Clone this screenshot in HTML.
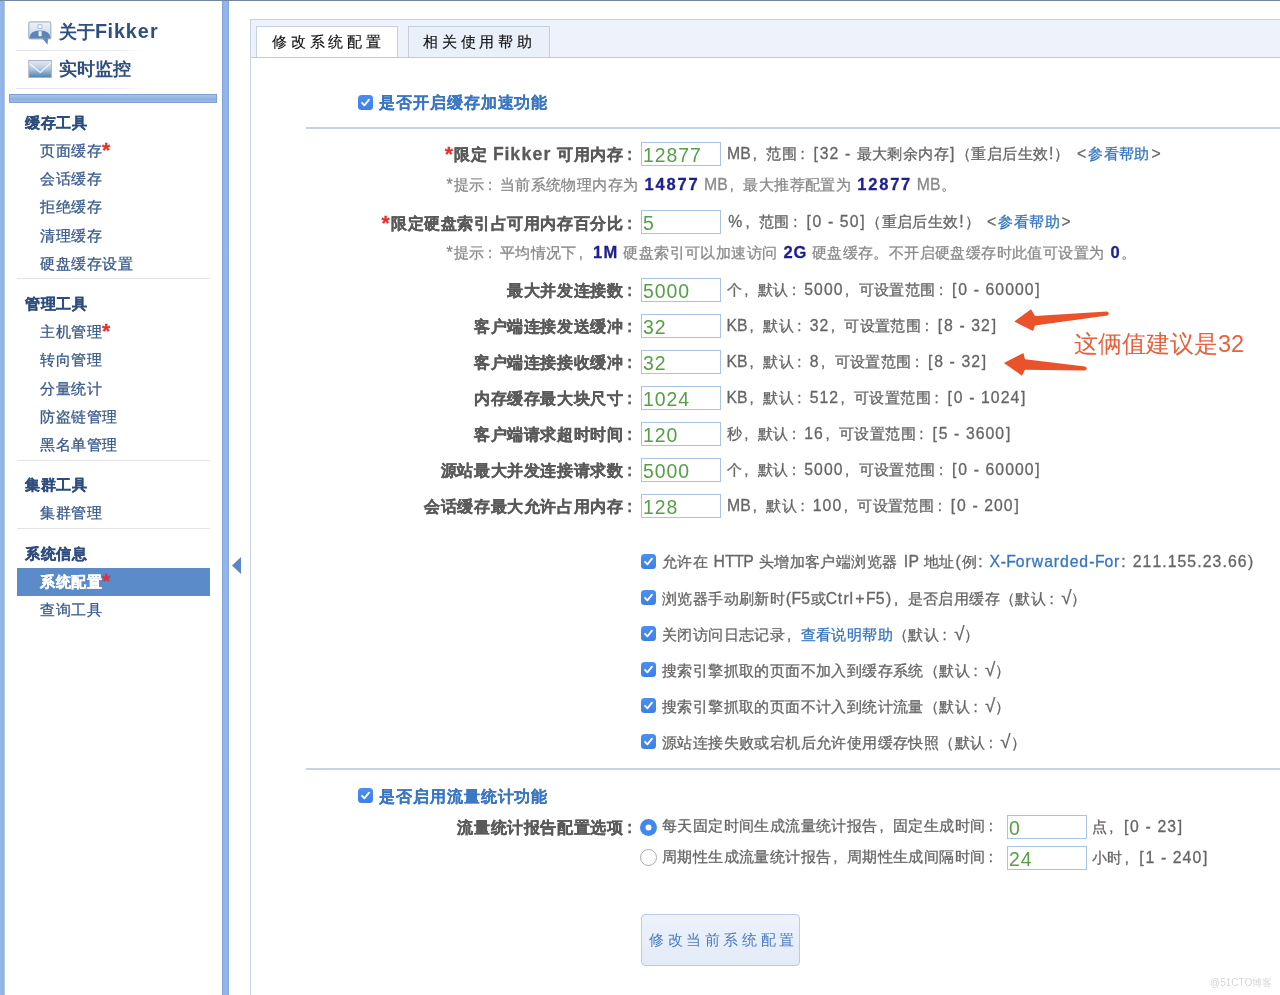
<!DOCTYPE html>
<html><head><meta charset="utf-8">
<style>
html,body{margin:0;padding:0;width:1280px;height:995px;overflow:hidden;background:#fff;}
body{position:relative;font-family:"Liberation Sans",sans-serif;}
#root{position:absolute;left:0;top:0;width:1280px;height:995px;will-change:transform;}
u{text-decoration:none;}
.fw{display:inline-block;text-decoration:none;letter-spacing:0;text-align:left;overflow:visible;}
.si,.u,.ct,.hint,.tab{-webkit-text-stroke:0.3px currentColor;}
.lab,.sh{-webkit-text-stroke:0.3px currentColor;}
.ttl{-webkit-text-stroke:0.15px currentColor;}
.tab{-webkit-text-stroke:0.15px currentColor!important;}
.a{position:absolute;white-space:nowrap;}
#topline{left:0;top:0;width:1280px;height:1px;background:#7486a6;}
#lstrip{left:0;top:0;width:5px;height:995px;background:linear-gradient(to right,#94b8ec 0,#8db1e6 70%,#6f90c4 80%,#fefefe 100%);}
#rbar{left:222px;top:0;width:7px;height:995px;background:linear-gradient(to right,#7d9cd0 0,#8fb3ea 20%,#95b9ee 60%,#86a8de 100%);}
.sep{position:absolute;height:1px;background:#e2e4e8;}
.sh{position:absolute;left:25px;font-size:15px;letter-spacing:.5px;line-height:18px;font-weight:bold;color:#2e4d7d;white-space:nowrap;}
.si{position:absolute;left:40px;font-size:15px;letter-spacing:.5px;line-height:18px;color:#3b5b8c;white-space:nowrap;}
.si b{color:#e8302a;font-weight:bold;font-size:21px;line-height:10px;vertical-align:-1px;}
#tabhdr{left:250px;top:19px;width:1030px;height:37px;background:#eef2fb;border-top:1px solid #c9cedd;border-bottom:1px solid #c3c9d6;}
#tabL{left:250px;top:19px;width:1px;height:976px;background:#c9d3e3;}
.tab{position:absolute;top:26px;height:31px;border:1px solid #c6cfdd;border-bottom:none;box-sizing:border-box;font-size:15px;line-height:29px;color:#111;letter-spacing:3.8px;white-space:nowrap;}
.rule{position:absolute;left:306px;width:974px;height:2px;background:#c5d3e6;}
.cb{position:absolute;width:15px;height:15px;border-radius:3.5px;background:linear-gradient(#4b8ff2,#3d7fe6);}
.cb svg{position:absolute;left:0;top:0}
.ttl{position:absolute;font-size:16px;letter-spacing:.93px;line-height:20px;font-weight:bold;color:#3a76c2;white-space:nowrap;}
.lab{position:absolute;right:640px;font-size:16px;letter-spacing:.6px;line-height:20px;font-weight:bold;color:#5a5a5a;white-space:nowrap;}
.rd{color:#e8302a;}
.rd u{font-size:21px!important;vertical-align:-1px;}
.inp{position:absolute;left:641px;width:80px;height:24px;border:1px solid #a9c4e2;box-sizing:border-box;background:#fff;}
.inp span{position:absolute;left:0.5px;top:2px;font-size:18.5px;line-height:20px;color:#55a045;white-space:nowrap;}
.u{position:absolute;left:727px;font-size:15px;letter-spacing:.4px;line-height:20px;color:#666;white-space:nowrap;}
.hint{position:absolute;left:446px;font-size:15px;letter-spacing:.4px;line-height:18px;color:#8a8a8a;white-space:nowrap;}
.hint b{color:#1f1f8f;}
.lk{color:#3676c0;}
.ct{position:absolute;left:662px;font-size:15px;letter-spacing:.4px;line-height:20px;color:#666;white-space:nowrap;}
</style></head><body>
<div id="root"><div class="a" id="lstrip"></div><div class="a" id="rbar"></div><div class="a" id="topline"></div>
<svg class="a" style="left:27px;top:20px" width="26" height="27" viewBox="0 0 26 27">
  <defs><linearGradient id="g1" x1="0" y1="0" x2="0" y2="1"><stop offset="0" stop-color="#eef2f7"/><stop offset="1" stop-color="#c9d6e6"/></linearGradient>
  <linearGradient id="g2" x1="0" y1="0" x2="0" y2="1"><stop offset="0" stop-color="#e2e9f1"/><stop offset="0.45" stop-color="#b9cde3"/><stop offset="1" stop-color="#4f7fb5"/></linearGradient></defs>
  <rect x="1.8" y="1.8" width="22" height="17.2" rx="1.5" fill="url(#g1)" stroke="#a9b5c4" stroke-width="1.2"/>
  <path d="M2.4 18.6 Q2.5 10.6 13 10.6 Q23.5 10.6 23.5 18.6 Z" fill="#5a86ba"/>
  <rect x="11.6" y="11.2" width="3" height="5" fill="#f2f6fa"/>
  <circle cx="13" cy="6.6" r="2.3" fill="#f4f7fb" stroke="#a9b8c9" stroke-width="1"/>
  <path d="M15.5 18.6 L20.5 24.8 L21 18.6 Z" fill="#5a86ba"/>
</svg>
<div class="a" style="left:59px;top:20px;font-size:18px;line-height:22px;font-weight:bold;color:#2f4f80;">关于<u style="font-size:19.80px;margin:0 0.10px 0 0.10px">F</u><u style="font-size:19.80px;margin:0 0.33px 0 0.33px">i</u><u style="font-size:19.80px;margin:0 0.48px 0 0.48px">k</u><u style="font-size:19.80px;margin:0 0.48px 0 0.48px">k</u><u style="font-size:19.80px;margin:0 0.47px 0 0.47px">e</u><u style="font-size:19.80px;margin:0 0.62px 0 0.62px">r</u></div>
<div class="sep" style="left:16px;top:50px;width:128px;background:linear-gradient(to right,#e3e5e9,#e9ebee 80%,#fff)"></div>
<svg class="a" style="left:27px;top:59px" width="26" height="20" viewBox="0 0 26 20">
  <rect x="1.8" y="1.5" width="22.6" height="17" fill="url(#g2)" stroke="#a7b3c2" stroke-width="1"/>
  <path d="M2.5 4.5 L13.3 13.5 L24 3.8" fill="none" stroke="#f2f6fb" stroke-width="1.2"/>
</svg>
<div class="a" style="left:59px;top:58px;font-size:18px;line-height:22px;font-weight:bold;color:#2f4f80;">实时监控</div>
<div class="sep" style="left:16px;top:88px;width:128px;background:linear-gradient(to right,#e3e5e9,#e9ebee 80%,#fff)"></div>
<div class="a" style="left:9px;top:94px;width:208px;height:9px;box-sizing:border-box;border:1px solid #7e9fd0;background:linear-gradient(to bottom,#a9c3ea,#8fb0e2 60%,#9cbbe8);"></div>
<div class="sh" style="top:113.5px">缓存工具</div>
<div class="si" style="top:142px">页面缓存<b>*</b></div>
<div class="si" style="top:170px">会话缓存</div>
<div class="si" style="top:198px">拒绝缓存</div>
<div class="si" style="top:227px">清理缓存</div>
<div class="si" style="top:255px">硬盘缓存设置</div>
<div class="sep" style="left:17px;top:278px;width:193px"></div>
<div class="sh" style="top:294.5px">管理工具</div>
<div class="si" style="top:323px">主机管理<b>*</b></div>
<div class="si" style="top:351px">转向管理</div>
<div class="si" style="top:380px">分量统计</div>
<div class="si" style="top:408px">防盗链管理</div>
<div class="si" style="top:436px">黑名单管理</div>
<div class="sep" style="left:17px;top:460px;width:193px"></div>
<div class="sh" style="top:476px">集群工具</div>
<div class="si" style="top:504px">集群管理</div>
<div class="sep" style="left:17px;top:528px;width:193px"></div>
<div class="sh" style="top:545px">系统信息</div>
<div class="a" style="left:17px;top:568px;width:193px;height:28px;background:#5b8bc8;"></div>
<div class="si" style="top:573px;color:#fff;font-weight:bold;">系统配置<b style="color:#e0303a">*</b></div>
<div class="si" style="top:601px">查询工具</div>
<svg class="a" style="left:230px;top:555px" width="14" height="21"><path d="M2 10.5 L11 2 L11 19 Z" fill="#5b86c4"/></svg>
<div class="a" id="tabhdr"></div><div class="a" id="tabL"></div>
<div class="tab" style="left:256px;width:142px;background:#fff;padding-left:15px;">修改系统配置</div>
<div class="tab" style="left:408px;width:142px;background:#eaf0f9;padding-left:14px;">相关使用帮助</div>
<div class="cb" style="left:358px;top:94.5px"><svg width="15" height="15"><path d="M4 7.8 L6.4 10.4 L11 4.6" fill="none" stroke="#fff" stroke-width="1.8" stroke-linecap="round" stroke-linejoin="round"/></svg></div>
<div class="ttl" style="left:379px;top:93px">是否开启缓存加速功能</div>
<div class="rule" style="top:127px"></div>
<div class="lab" style="top:144px"><span class="rd"><u style="font-size:17.60px;margin:0 0.62px 0 0.62px">*</u></span>限定<u style="font-size:17.60px;margin:0 0.09px 0 0.09px"> </u><u style="font-size:17.60px;margin:0 -0.01px 0 -0.01px">F</u><u style="font-size:17.60px;margin:0 0.09px 0 0.09px">i</u><u style="font-size:17.60px;margin:0 0.33px 0 0.33px">k</u><u style="font-size:17.60px;margin:0 0.33px 0 0.33px">k</u><u style="font-size:17.60px;margin:0 0.32px 0 0.32px">e</u><u style="font-size:17.60px;margin:0 0.40px 0 0.40px">r</u><u style="font-size:17.60px;margin:0 0.09px 0 0.09px"> </u>可用内存<s class="fw" style="width:16.60px;text-indent:3.65px">:</s></div>
<div class="inp" style="left:641px;top:142px"><span><u style="font-size:19.43px;margin:0 0.48px 0 0.48px">1</u><u style="font-size:19.43px;margin:0 0.48px 0 0.48px">2</u><u style="font-size:19.43px;margin:0 0.48px 0 0.48px">8</u><u style="font-size:19.43px;margin:0 0.48px 0 0.48px">7</u><u style="font-size:19.43px;margin:0 0.48px 0 0.48px">7</u></span></div>
<div class="u" style="left:727px;top:144px"><u style="font-size:15.75px;margin:0 -0.12px 0 -0.12px">M</u><u style="font-size:15.75px;margin:0 -0.17px 0 -0.17px">B</u><s class="fw" style="width:15.40px;text-indent:1.85px">,</s>范围<s class="fw" style="width:15.40px;text-indent:3.39px">:</s><u style="font-size:15.75px;margin:0 1.11px 0 1.11px">[</u><u style="font-size:15.75px;margin:0 0.32px 0 0.32px">3</u><u style="font-size:15.75px;margin:0 0.32px 0 0.32px">2</u><u style="font-size:15.75px;margin:0 0.32px 0 0.32px"> </u><u style="font-size:15.75px;margin:0 0.50px 0 0.50px">-</u><u style="font-size:15.75px;margin:0 0.32px 0 0.32px"> </u>最大剩余内存<u style="font-size:15.75px;margin:0 1.11px 0 1.11px">]</u>（重启后生效<u style="font-size:15.75px;margin:0 0.66px 0 0.66px">!</u>）<u style="font-size:15.75px;margin:0 0.32px 0 0.32px"> </u><u style="font-size:15.75px;margin:0 1.65px 0 1.65px">&lt;</u><span class="lk">参看帮助</span><u style="font-size:15.75px;margin:0 1.65px 0 1.65px">&gt;</u></div>
<div class="hint" style="top:175px"><u style="font-size:15.75px;margin:0 0.59px 0 0.59px">*</u>提示<s class="fw" style="width:15.40px;text-indent:3.39px">:</s>当前系统物理内存为<u style="font-size:15.75px;margin:0 0.32px 0 0.32px"> </u><b><u style="font-size:16.50px;margin:0 0.69px 0 0.69px">1</u><u style="font-size:16.50px;margin:0 0.69px 0 0.69px">4</u><u style="font-size:16.50px;margin:0 0.69px 0 0.69px">8</u><u style="font-size:16.50px;margin:0 0.69px 0 0.69px">7</u><u style="font-size:16.50px;margin:0 0.69px 0 0.69px">7</u></b><u style="font-size:15.75px;margin:0 0.32px 0 0.32px"> </u><u style="font-size:15.75px;margin:0 -0.12px 0 -0.12px">M</u><u style="font-size:15.75px;margin:0 -0.17px 0 -0.17px">B</u><s class="fw" style="width:15.40px;text-indent:1.85px">,</s>最大推荐配置为<u style="font-size:15.75px;margin:0 0.32px 0 0.32px"> </u><b><u style="font-size:16.50px;margin:0 0.69px 0 0.69px">1</u><u style="font-size:16.50px;margin:0 0.69px 0 0.69px">2</u><u style="font-size:16.50px;margin:0 0.69px 0 0.69px">8</u><u style="font-size:16.50px;margin:0 0.69px 0 0.69px">7</u><u style="font-size:16.50px;margin:0 0.69px 0 0.69px">7</u></b><u style="font-size:15.75px;margin:0 0.32px 0 0.32px"> </u><u style="font-size:15.75px;margin:0 -0.12px 0 -0.12px">M</u><u style="font-size:15.75px;margin:0 -0.17px 0 -0.17px">B</u>。</div>
<div class="lab" style="top:213px"><span class="rd"><u style="font-size:17.60px;margin:0 0.62px 0 0.62px">*</u></span>限定硬盘索引占可用内存百分比<s class="fw" style="width:16.60px;text-indent:3.65px">:</s></div>
<div class="inp" style="left:641px;top:210px"><span><u style="font-size:19.43px;margin:0 0.48px 0 0.48px">5</u></span></div>
<div class="u" style="left:727px;top:212px"><u style="font-size:15.75px;margin:0 1.15px 0 1.15px">%</u><s class="fw" style="width:15.40px;text-indent:1.85px">,</s>范围<s class="fw" style="width:15.40px;text-indent:3.39px">:</s><u style="font-size:15.75px;margin:0 1.11px 0 1.11px">[</u><u style="font-size:15.75px;margin:0 0.32px 0 0.32px">0</u><u style="font-size:15.75px;margin:0 0.32px 0 0.32px"> </u><u style="font-size:15.75px;margin:0 0.50px 0 0.50px">-</u><u style="font-size:15.75px;margin:0 0.32px 0 0.32px"> </u><u style="font-size:15.75px;margin:0 0.32px 0 0.32px">5</u><u style="font-size:15.75px;margin:0 0.32px 0 0.32px">0</u><u style="font-size:15.75px;margin:0 1.11px 0 1.11px">]</u>（重启后生效<u style="font-size:15.75px;margin:0 0.66px 0 0.66px">!</u>）<u style="font-size:15.75px;margin:0 0.32px 0 0.32px"> </u><u style="font-size:15.75px;margin:0 1.65px 0 1.65px">&lt;</u><span class="lk">参看帮助</span><u style="font-size:15.75px;margin:0 1.65px 0 1.65px">&gt;</u></div>
<div class="hint" style="top:243px"><u style="font-size:15.75px;margin:0 0.59px 0 0.59px">*</u>提示<s class="fw" style="width:15.40px;text-indent:3.39px">:</s>平均情况下<s class="fw" style="width:15.40px;text-indent:1.85px">,</s><b><u style="font-size:16.50px;margin:0 0.69px 0 0.69px">1</u><u style="font-size:16.50px;margin:0 0.29px 0 0.29px">M</u></b><u style="font-size:15.75px;margin:0 0.32px 0 0.32px"> </u>硬盘索引可以加速访问<u style="font-size:15.75px;margin:0 0.32px 0 0.32px"> </u><b><u style="font-size:16.50px;margin:0 0.69px 0 0.69px">2</u><u style="font-size:16.50px;margin:0 -0.29px 0 -0.29px">G</u></b><u style="font-size:15.75px;margin:0 0.32px 0 0.32px"> </u>硬盘缓存。不开启硬盘缓存时此值可设置为<u style="font-size:15.75px;margin:0 0.32px 0 0.32px"> </u><b><u style="font-size:16.50px;margin:0 0.69px 0 0.69px">0</u></b>。</div>
<div class="lab" style="top:281px">最大并发连接数<s class="fw" style="width:16.60px;text-indent:3.65px">:</s></div>
<div class="inp" style="left:641px;top:278px"><span><u style="font-size:19.43px;margin:0 0.48px 0 0.48px">5</u><u style="font-size:19.43px;margin:0 0.48px 0 0.48px">0</u><u style="font-size:19.43px;margin:0 0.48px 0 0.48px">0</u><u style="font-size:19.43px;margin:0 0.48px 0 0.48px">0</u></span></div>
<div class="u" style="left:727px;top:280px">个<s class="fw" style="width:15.40px;text-indent:1.85px">,</s>默认<s class="fw" style="width:15.40px;text-indent:3.39px">:</s><u style="font-size:15.75px;margin:0 0.32px 0 0.32px">5</u><u style="font-size:15.75px;margin:0 0.32px 0 0.32px">0</u><u style="font-size:15.75px;margin:0 0.32px 0 0.32px">0</u><u style="font-size:15.75px;margin:0 0.32px 0 0.32px">0</u><s class="fw" style="width:15.40px;text-indent:1.85px">,</s>可设置范围<s class="fw" style="width:15.40px;text-indent:3.39px">:</s><u style="font-size:15.75px;margin:0 1.11px 0 1.11px">[</u><u style="font-size:15.75px;margin:0 0.32px 0 0.32px">0</u><u style="font-size:15.75px;margin:0 0.32px 0 0.32px"> </u><u style="font-size:15.75px;margin:0 0.50px 0 0.50px">-</u><u style="font-size:15.75px;margin:0 0.32px 0 0.32px"> </u><u style="font-size:15.75px;margin:0 0.32px 0 0.32px">6</u><u style="font-size:15.75px;margin:0 0.32px 0 0.32px">0</u><u style="font-size:15.75px;margin:0 0.32px 0 0.32px">0</u><u style="font-size:15.75px;margin:0 0.32px 0 0.32px">0</u><u style="font-size:15.75px;margin:0 0.32px 0 0.32px">0</u><u style="font-size:15.75px;margin:0 1.11px 0 1.11px">]</u></div>
<div class="lab" style="top:317px">客户端连接发送缓冲<s class="fw" style="width:16.60px;text-indent:3.65px">:</s></div>
<div class="inp" style="left:641px;top:314px"><span><u style="font-size:19.43px;margin:0 0.48px 0 0.48px">3</u><u style="font-size:19.43px;margin:0 0.48px 0 0.48px">2</u></span></div>
<div class="u" style="left:727px;top:316px"><u style="font-size:15.75px;margin:0 -0.40px 0 -0.40px">K</u><u style="font-size:15.75px;margin:0 -0.17px 0 -0.17px">B</u><s class="fw" style="width:15.40px;text-indent:1.85px">,</s>默认<s class="fw" style="width:15.40px;text-indent:3.39px">:</s><u style="font-size:15.75px;margin:0 0.32px 0 0.32px">3</u><u style="font-size:15.75px;margin:0 0.32px 0 0.32px">2</u><s class="fw" style="width:15.40px;text-indent:1.85px">,</s>可设置范围<s class="fw" style="width:15.40px;text-indent:3.39px">:</s><u style="font-size:15.75px;margin:0 1.11px 0 1.11px">[</u><u style="font-size:15.75px;margin:0 0.32px 0 0.32px">8</u><u style="font-size:15.75px;margin:0 0.32px 0 0.32px"> </u><u style="font-size:15.75px;margin:0 0.50px 0 0.50px">-</u><u style="font-size:15.75px;margin:0 0.32px 0 0.32px"> </u><u style="font-size:15.75px;margin:0 0.32px 0 0.32px">3</u><u style="font-size:15.75px;margin:0 0.32px 0 0.32px">2</u><u style="font-size:15.75px;margin:0 1.11px 0 1.11px">]</u></div>
<div class="lab" style="top:353px">客户端连接接收缓冲<s class="fw" style="width:16.60px;text-indent:3.65px">:</s></div>
<div class="inp" style="left:641px;top:350px"><span><u style="font-size:19.43px;margin:0 0.48px 0 0.48px">3</u><u style="font-size:19.43px;margin:0 0.48px 0 0.48px">2</u></span></div>
<div class="u" style="left:727px;top:352px"><u style="font-size:15.75px;margin:0 -0.40px 0 -0.40px">K</u><u style="font-size:15.75px;margin:0 -0.17px 0 -0.17px">B</u><s class="fw" style="width:15.40px;text-indent:1.85px">,</s>默认<s class="fw" style="width:15.40px;text-indent:3.39px">:</s><u style="font-size:15.75px;margin:0 0.32px 0 0.32px">8</u><s class="fw" style="width:15.40px;text-indent:1.85px">,</s>可设置范围<s class="fw" style="width:15.40px;text-indent:3.39px">:</s><u style="font-size:15.75px;margin:0 1.11px 0 1.11px">[</u><u style="font-size:15.75px;margin:0 0.32px 0 0.32px">8</u><u style="font-size:15.75px;margin:0 0.32px 0 0.32px"> </u><u style="font-size:15.75px;margin:0 0.50px 0 0.50px">-</u><u style="font-size:15.75px;margin:0 0.32px 0 0.32px"> </u><u style="font-size:15.75px;margin:0 0.32px 0 0.32px">3</u><u style="font-size:15.75px;margin:0 0.32px 0 0.32px">2</u><u style="font-size:15.75px;margin:0 1.11px 0 1.11px">]</u></div>
<div class="lab" style="top:389px">内存缓存最大块尺寸<s class="fw" style="width:16.60px;text-indent:3.65px">:</s></div>
<div class="inp" style="left:641px;top:386px"><span><u style="font-size:19.43px;margin:0 0.48px 0 0.48px">1</u><u style="font-size:19.43px;margin:0 0.48px 0 0.48px">0</u><u style="font-size:19.43px;margin:0 0.48px 0 0.48px">2</u><u style="font-size:19.43px;margin:0 0.48px 0 0.48px">4</u></span></div>
<div class="u" style="left:727px;top:388px"><u style="font-size:15.75px;margin:0 -0.40px 0 -0.40px">K</u><u style="font-size:15.75px;margin:0 -0.17px 0 -0.17px">B</u><s class="fw" style="width:15.40px;text-indent:1.85px">,</s>默认<s class="fw" style="width:15.40px;text-indent:3.39px">:</s><u style="font-size:15.75px;margin:0 0.32px 0 0.32px">5</u><u style="font-size:15.75px;margin:0 0.32px 0 0.32px">1</u><u style="font-size:15.75px;margin:0 0.32px 0 0.32px">2</u><s class="fw" style="width:15.40px;text-indent:1.85px">,</s>可设置范围<s class="fw" style="width:15.40px;text-indent:3.39px">:</s><u style="font-size:15.75px;margin:0 1.11px 0 1.11px">[</u><u style="font-size:15.75px;margin:0 0.32px 0 0.32px">0</u><u style="font-size:15.75px;margin:0 0.32px 0 0.32px"> </u><u style="font-size:15.75px;margin:0 0.50px 0 0.50px">-</u><u style="font-size:15.75px;margin:0 0.32px 0 0.32px"> </u><u style="font-size:15.75px;margin:0 0.32px 0 0.32px">1</u><u style="font-size:15.75px;margin:0 0.32px 0 0.32px">0</u><u style="font-size:15.75px;margin:0 0.32px 0 0.32px">2</u><u style="font-size:15.75px;margin:0 0.32px 0 0.32px">4</u><u style="font-size:15.75px;margin:0 1.11px 0 1.11px">]</u></div>
<div class="lab" style="top:425px">客户端请求超时时间<s class="fw" style="width:16.60px;text-indent:3.65px">:</s></div>
<div class="inp" style="left:641px;top:422px"><span><u style="font-size:19.43px;margin:0 0.48px 0 0.48px">1</u><u style="font-size:19.43px;margin:0 0.48px 0 0.48px">2</u><u style="font-size:19.43px;margin:0 0.48px 0 0.48px">0</u></span></div>
<div class="u" style="left:727px;top:424px">秒<s class="fw" style="width:15.40px;text-indent:1.85px">,</s>默认<s class="fw" style="width:15.40px;text-indent:3.39px">:</s><u style="font-size:15.75px;margin:0 0.32px 0 0.32px">1</u><u style="font-size:15.75px;margin:0 0.32px 0 0.32px">6</u><s class="fw" style="width:15.40px;text-indent:1.85px">,</s>可设置范围<s class="fw" style="width:15.40px;text-indent:3.39px">:</s><u style="font-size:15.75px;margin:0 1.11px 0 1.11px">[</u><u style="font-size:15.75px;margin:0 0.32px 0 0.32px">5</u><u style="font-size:15.75px;margin:0 0.32px 0 0.32px"> </u><u style="font-size:15.75px;margin:0 0.50px 0 0.50px">-</u><u style="font-size:15.75px;margin:0 0.32px 0 0.32px"> </u><u style="font-size:15.75px;margin:0 0.32px 0 0.32px">3</u><u style="font-size:15.75px;margin:0 0.32px 0 0.32px">6</u><u style="font-size:15.75px;margin:0 0.32px 0 0.32px">0</u><u style="font-size:15.75px;margin:0 0.32px 0 0.32px">0</u><u style="font-size:15.75px;margin:0 1.11px 0 1.11px">]</u></div>
<div class="lab" style="top:461px">源站最大并发连接请求数<s class="fw" style="width:16.60px;text-indent:3.65px">:</s></div>
<div class="inp" style="left:641px;top:458px"><span><u style="font-size:19.43px;margin:0 0.48px 0 0.48px">5</u><u style="font-size:19.43px;margin:0 0.48px 0 0.48px">0</u><u style="font-size:19.43px;margin:0 0.48px 0 0.48px">0</u><u style="font-size:19.43px;margin:0 0.48px 0 0.48px">0</u></span></div>
<div class="u" style="left:727px;top:460px">个<s class="fw" style="width:15.40px;text-indent:1.85px">,</s>默认<s class="fw" style="width:15.40px;text-indent:3.39px">:</s><u style="font-size:15.75px;margin:0 0.32px 0 0.32px">5</u><u style="font-size:15.75px;margin:0 0.32px 0 0.32px">0</u><u style="font-size:15.75px;margin:0 0.32px 0 0.32px">0</u><u style="font-size:15.75px;margin:0 0.32px 0 0.32px">0</u><s class="fw" style="width:15.40px;text-indent:1.85px">,</s>可设置范围<s class="fw" style="width:15.40px;text-indent:3.39px">:</s><u style="font-size:15.75px;margin:0 1.11px 0 1.11px">[</u><u style="font-size:15.75px;margin:0 0.32px 0 0.32px">0</u><u style="font-size:15.75px;margin:0 0.32px 0 0.32px"> </u><u style="font-size:15.75px;margin:0 0.50px 0 0.50px">-</u><u style="font-size:15.75px;margin:0 0.32px 0 0.32px"> </u><u style="font-size:15.75px;margin:0 0.32px 0 0.32px">6</u><u style="font-size:15.75px;margin:0 0.32px 0 0.32px">0</u><u style="font-size:15.75px;margin:0 0.32px 0 0.32px">0</u><u style="font-size:15.75px;margin:0 0.32px 0 0.32px">0</u><u style="font-size:15.75px;margin:0 0.32px 0 0.32px">0</u><u style="font-size:15.75px;margin:0 1.11px 0 1.11px">]</u></div>
<div class="lab" style="top:497px">会话缓存最大允许占用内存<s class="fw" style="width:16.60px;text-indent:3.65px">:</s></div>
<div class="inp" style="left:641px;top:494px"><span><u style="font-size:19.43px;margin:0 0.48px 0 0.48px">1</u><u style="font-size:19.43px;margin:0 0.48px 0 0.48px">2</u><u style="font-size:19.43px;margin:0 0.48px 0 0.48px">8</u></span></div>
<div class="u" style="left:727px;top:496px"><u style="font-size:15.75px;margin:0 -0.12px 0 -0.12px">M</u><u style="font-size:15.75px;margin:0 -0.17px 0 -0.17px">B</u><s class="fw" style="width:15.40px;text-indent:1.85px">,</s>默认<s class="fw" style="width:15.40px;text-indent:3.39px">:</s><u style="font-size:15.75px;margin:0 0.32px 0 0.32px">1</u><u style="font-size:15.75px;margin:0 0.32px 0 0.32px">0</u><u style="font-size:15.75px;margin:0 0.32px 0 0.32px">0</u><s class="fw" style="width:15.40px;text-indent:1.85px">,</s>可设置范围<s class="fw" style="width:15.40px;text-indent:3.39px">:</s><u style="font-size:15.75px;margin:0 1.11px 0 1.11px">[</u><u style="font-size:15.75px;margin:0 0.32px 0 0.32px">0</u><u style="font-size:15.75px;margin:0 0.32px 0 0.32px"> </u><u style="font-size:15.75px;margin:0 0.50px 0 0.50px">-</u><u style="font-size:15.75px;margin:0 0.32px 0 0.32px"> </u><u style="font-size:15.75px;margin:0 0.32px 0 0.32px">2</u><u style="font-size:15.75px;margin:0 0.32px 0 0.32px">0</u><u style="font-size:15.75px;margin:0 0.32px 0 0.32px">0</u><u style="font-size:15.75px;margin:0 1.11px 0 1.11px">]</u></div>
<div class="cb" style="left:641px;top:554px"><svg width="15" height="15"><path d="M4 7.8 L6.4 10.4 L11 4.6" fill="none" stroke="#fff" stroke-width="1.8" stroke-linecap="round" stroke-linejoin="round"/></svg></div>
<div class="ct" style="top:552px">允许在<u style="font-size:15.75px;margin:0 0.32px 0 0.32px"> </u><u style="font-size:15.75px;margin:0 -0.10px 0 -0.10px">H</u><u style="font-size:15.75px;margin:0 -0.31px 0 -0.31px">T</u><u style="font-size:15.75px;margin:0 -0.31px 0 -0.31px">T</u><u style="font-size:15.75px;margin:0 -0.81px 0 -0.81px">P</u><u style="font-size:15.75px;margin:0 0.32px 0 0.32px"> </u>头增加客户端浏览器<u style="font-size:15.75px;margin:0 0.32px 0 0.32px"> </u><u style="font-size:15.75px;margin:0 0.87px 0 0.87px">I</u><u style="font-size:15.75px;margin:0 -0.81px 0 -0.81px">P</u><u style="font-size:15.75px;margin:0 0.32px 0 0.32px"> </u>地址<u style="font-size:15.75px;margin:0 0.67px 0 0.67px">(</u>例<u style="font-size:15.75px;margin:0 1.11px 0 1.11px">:</u><u style="font-size:15.75px;margin:0 0.32px 0 0.32px"> </u><span class="lk"><u style="font-size:15.75px;margin:0 -0.18px 0 -0.18px">X</u><u style="font-size:15.75px;margin:0 0.50px 0 0.50px">-</u><u style="font-size:15.75px;margin:0 -0.58px 0 -0.58px">F</u><u style="font-size:15.75px;margin:0 0.13px 0 0.13px">o</u><u style="font-size:15.75px;margin:0 0.34px 0 0.34px">r</u><u style="font-size:15.75px;margin:0 0.41px 0 0.41px">w</u><u style="font-size:15.75px;margin:0 0.14px 0 0.14px">a</u><u style="font-size:15.75px;margin:0 0.34px 0 0.34px">r</u><u style="font-size:15.75px;margin:0 0.31px 0 0.31px">d</u><u style="font-size:15.75px;margin:0 0.16px 0 0.16px">e</u><u style="font-size:15.75px;margin:0 0.31px 0 0.31px">d</u><u style="font-size:15.75px;margin:0 0.50px 0 0.50px">-</u><u style="font-size:15.75px;margin:0 -0.58px 0 -0.58px">F</u><u style="font-size:15.75px;margin:0 0.13px 0 0.13px">o</u><u style="font-size:15.75px;margin:0 0.34px 0 0.34px">r</u></span><u style="font-size:15.75px;margin:0 1.11px 0 1.11px">:</u><u style="font-size:15.75px;margin:0 0.32px 0 0.32px"> </u><u style="font-size:15.75px;margin:0 0.32px 0 0.32px">2</u><u style="font-size:15.75px;margin:0 0.32px 0 0.32px">1</u><u style="font-size:15.75px;margin:0 0.32px 0 0.32px">1</u><u style="font-size:15.75px;margin:0 0.41px 0 0.41px">.</u><u style="font-size:15.75px;margin:0 0.32px 0 0.32px">1</u><u style="font-size:15.75px;margin:0 0.32px 0 0.32px">5</u><u style="font-size:15.75px;margin:0 0.32px 0 0.32px">5</u><u style="font-size:15.75px;margin:0 0.41px 0 0.41px">.</u><u style="font-size:15.75px;margin:0 0.32px 0 0.32px">2</u><u style="font-size:15.75px;margin:0 0.32px 0 0.32px">3</u><u style="font-size:15.75px;margin:0 0.41px 0 0.41px">.</u><u style="font-size:15.75px;margin:0 0.32px 0 0.32px">6</u><u style="font-size:15.75px;margin:0 0.32px 0 0.32px">6</u><u style="font-size:15.75px;margin:0 0.67px 0 0.67px">)</u></div>
<div class="cb" style="left:641px;top:590px"><svg width="15" height="15"><path d="M4 7.8 L6.4 10.4 L11 4.6" fill="none" stroke="#fff" stroke-width="1.8" stroke-linecap="round" stroke-linejoin="round"/></svg></div>
<div class="ct" style="top:588px">浏览器手动刷新时<u style="font-size:15.75px;margin:0 0.67px 0 0.67px">(</u><u style="font-size:15.75px;margin:0 -0.58px 0 -0.58px">F</u><u style="font-size:15.75px;margin:0 0.32px 0 0.32px">5</u>或<u style="font-size:15.75px;margin:0 -0.51px 0 -0.51px">C</u><u style="font-size:15.75px;margin:0 0.63px 0 0.63px">t</u><u style="font-size:15.75px;margin:0 0.34px 0 0.34px">r</u><u style="font-size:15.75px;margin:0 0.19px 0 0.19px">l</u><u style="font-size:15.75px;margin:0 1.65px 0 1.65px">+</u><u style="font-size:15.75px;margin:0 -0.58px 0 -0.58px">F</u><u style="font-size:15.75px;margin:0 0.32px 0 0.32px">5</u><u style="font-size:15.75px;margin:0 0.67px 0 0.67px">)</u><s class="fw" style="width:15.40px;text-indent:1.85px">,</s>是否启用缓存（默认<s class="fw" style="width:15.40px;text-indent:3.39px">:</s><u style="font-size:18.75px;margin:0 -0.44px 0 -0.44px">√</u>）</div>
<div class="cb" style="left:641px;top:626px"><svg width="15" height="15"><path d="M4 7.8 L6.4 10.4 L11 4.6" fill="none" stroke="#fff" stroke-width="1.8" stroke-linecap="round" stroke-linejoin="round"/></svg></div>
<div class="ct" style="top:624px">关闭访问日志记录<s class="fw" style="width:15.40px;text-indent:1.85px">,</s><span class="lk">查看说明帮助</span>（默认<s class="fw" style="width:15.40px;text-indent:3.39px">:</s><u style="font-size:18.75px;margin:0 -0.44px 0 -0.44px">√</u>）</div>
<div class="cb" style="left:641px;top:662px"><svg width="15" height="15"><path d="M4 7.8 L6.4 10.4 L11 4.6" fill="none" stroke="#fff" stroke-width="1.8" stroke-linecap="round" stroke-linejoin="round"/></svg></div>
<div class="ct" style="top:660px">搜索引擎抓取的页面不加入到缓存系统（默认<s class="fw" style="width:15.40px;text-indent:3.39px">:</s><u style="font-size:18.75px;margin:0 -0.44px 0 -0.44px">√</u>）</div>
<div class="cb" style="left:641px;top:698px"><svg width="15" height="15"><path d="M4 7.8 L6.4 10.4 L11 4.6" fill="none" stroke="#fff" stroke-width="1.8" stroke-linecap="round" stroke-linejoin="round"/></svg></div>
<div class="ct" style="top:696px">搜索引擎抓取的页面不计入到统计流量（默认<s class="fw" style="width:15.40px;text-indent:3.39px">:</s><u style="font-size:18.75px;margin:0 -0.44px 0 -0.44px">√</u>）</div>
<div class="cb" style="left:641px;top:734px"><svg width="15" height="15"><path d="M4 7.8 L6.4 10.4 L11 4.6" fill="none" stroke="#fff" stroke-width="1.8" stroke-linecap="round" stroke-linejoin="round"/></svg></div>
<div class="ct" style="top:732px">源站连接失败或宕机后允许使用缓存快照（默认<s class="fw" style="width:15.40px;text-indent:3.39px">:</s><u style="font-size:18.75px;margin:0 -0.44px 0 -0.44px">√</u>）</div>
<div class="rule" style="top:768px"></div>
<div class="cb" style="left:358px;top:788px"><svg width="15" height="15"><path d="M4 7.8 L6.4 10.4 L11 4.6" fill="none" stroke="#fff" stroke-width="1.8" stroke-linecap="round" stroke-linejoin="round"/></svg></div>
<div class="ttl" style="left:379px;top:787px">是否启用流量统计功能</div>
<div class="lab" style="top:818px">流量统计报告配置选项<s class="fw" style="width:16.60px;text-indent:3.65px">:</s></div>
<svg class="a" style="left:639px;top:818px" width="19" height="19"><circle cx="9.5" cy="9.5" r="8.5" fill="#4287ee"/><circle cx="9.5" cy="9.5" r="3" fill="#fff"/></svg>
<div class="ct" style="top:816px">每天固定时间生成流量统计报告<s class="fw" style="width:15.40px;text-indent:1.85px">,</s>固定生成时间<s class="fw" style="width:15.40px;text-indent:3.39px">:</s></div>
<div class="inp" style="left:1007px;top:815px"><span><u style="font-size:19.43px;margin:0 0.48px 0 0.48px">0</u></span></div>
<div class="u" style="left:1092px;top:817px">点<s class="fw" style="width:15.40px;text-indent:1.85px">,</s><u style="font-size:15.75px;margin:0 1.11px 0 1.11px">[</u><u style="font-size:15.75px;margin:0 0.32px 0 0.32px">0</u><u style="font-size:15.75px;margin:0 0.32px 0 0.32px"> </u><u style="font-size:15.75px;margin:0 0.50px 0 0.50px">-</u><u style="font-size:15.75px;margin:0 0.32px 0 0.32px"> </u><u style="font-size:15.75px;margin:0 0.32px 0 0.32px">2</u><u style="font-size:15.75px;margin:0 0.32px 0 0.32px">3</u><u style="font-size:15.75px;margin:0 1.11px 0 1.11px">]</u></div>
<svg class="a" style="left:639px;top:848px" width="19" height="19"><circle cx="9.5" cy="9.5" r="8" fill="#fff" stroke="#aaa" stroke-width="1"/></svg>
<div class="ct" style="top:847px">周期性生成流量统计报告<s class="fw" style="width:15.40px;text-indent:1.85px">,</s>周期性生成间隔时间<s class="fw" style="width:15.40px;text-indent:3.39px">:</s></div>
<div class="inp" style="left:1007px;top:846px"><span><u style="font-size:19.43px;margin:0 0.48px 0 0.48px">2</u><u style="font-size:19.43px;margin:0 0.48px 0 0.48px">4</u></span></div>
<div class="u" style="left:1092px;top:848px">小时<s class="fw" style="width:15.40px;text-indent:1.85px">,</s><u style="font-size:15.75px;margin:0 1.11px 0 1.11px">[</u><u style="font-size:15.75px;margin:0 0.32px 0 0.32px">1</u><u style="font-size:15.75px;margin:0 0.32px 0 0.32px"> </u><u style="font-size:15.75px;margin:0 0.50px 0 0.50px">-</u><u style="font-size:15.75px;margin:0 0.32px 0 0.32px"> </u><u style="font-size:15.75px;margin:0 0.32px 0 0.32px">2</u><u style="font-size:15.75px;margin:0 0.32px 0 0.32px">4</u><u style="font-size:15.75px;margin:0 0.32px 0 0.32px">0</u><u style="font-size:15.75px;margin:0 1.11px 0 1.11px">]</u></div>
<div class="a" style="left:641px;top:914px;width:159px;height:52px;box-sizing:border-box;border:1px solid #b9cbe6;border-radius:4px;background:linear-gradient(#edf2fb,#e3ebf8);"></div>
<div class="a" style="left:649px;top:930px;font-size:15px;line-height:20px;color:#4a7cc0;letter-spacing:3.6px;">修改当前系统配置</div>
<svg class="a" style="left:0;top:0" width="1280" height="995">
  <path d="M1014.3 321.6 L1031 309.2 L1035 316 L1107 311.4 Q1110.5 313.3 1107.5 315.6 L1035 325.4 L1033 331 Z" fill="#e9522b"/>
  <path d="M1003.9 363 L1023.4 352.9 L1025 359.2 L1085 366.6 Q1088.5 368.6 1085 370.6 L1025 369.8 L1021.9 375.7 Z" fill="#e9522b"/>
</svg>
<div class="a" style="left:1074px;top:330px;font-size:23.5px;line-height:28px;color:#e8603c;">这俩值建议是32</div>
<div class="a" style="left:1210px;top:976px;font-size:10px;line-height:14px;color:#d6d6d6;">@51CTO博客</div>
</div></body></html>
